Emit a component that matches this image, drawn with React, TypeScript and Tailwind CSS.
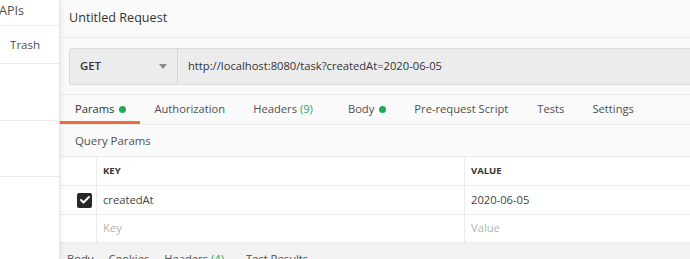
import { Check } from "lucide-react";

const tabs = [
  { name: "Params", dot: true, active: true },
  { name: "Authorization" },
  { name: "Headers", count: "(9)" },
  { name: "Body", dot: true, shift: true },
  { name: "Pre-request Script" },
  { name: "Tests", nudge: true },
  { name: "Settings" },
];

export default function App() {
  return (
    <div className="flex w-[690px] h-[259px] overflow-hidden bg-[#fafafa] text-[#505050] font-['Open_Sans',sans-serif]">
      {/* Sidebar */}
      <div className="w-[60px] shrink-0 bg-white border-r border-[#e6e6e6] shadow-[2px_0_4px_rgba(0,0,0,0.06)] z-10">
        <div className="h-[26px] border-b border-[#ececec] flex items-center text-[12.6px] -ml-[1px] leading-none pb-[2px]">APIs</div>
        <div className="h-[38px] border-b border-[#ececec] flex items-center pl-[10px] text-[11.6px]">Trash</div>
        <div className="h-[57px] border-b border-[#ececec]" />
        <div className="h-[56px] border-b border-[#ececec]" />
      </div>

      {/* Main */}
      <div className="flex-1 min-w-0 flex flex-col">
        <div className="h-[38px] shrink-0 border-b border-[#ececec] flex items-center pl-[9px] pb-[1px] text-[12.6px] text-[#333]">
          Untitled Request
        </div>

        <div className="h-[56px] shrink-0 flex items-center pl-[9px]">
          <div className="flex h-[37px] w-full border border-[#dcdcdc] border-r-0 rounded-l-[3px] bg-[#ececec]">
            <div className="w-[108px] shrink-0 flex items-center justify-between pl-[10px] pr-[10px] border-r border-[#d4d4d4] text-[11.4px] text-[#333] font-semibold">
              <span>GET</span>
              <span className="w-0 h-0 border-l-[4px] border-r-[4px] border-t-[5px] border-l-transparent border-r-transparent border-t-[#8a8a8a]" />
            </div>
            <div className="flex items-center pl-[10px] text-[11.2px] text-[#333] whitespace-nowrap">
              http://localhost:8080/task?createdAt=2020-06-05
            </div>
          </div>
        </div>

        <div className="h-[31px] shrink-0 flex items-stretch border-t border-[#ececec] border-b text-[11.2px] whitespace-nowrap">
          {tabs.map((t) => (
            <div
              key={t.name}
              className={
                (t.active
                  ? "flex items-center gap-[5px] pl-[15px] pr-[14px] border-b-[3px] border-[#f26b3a] pt-[3px] text-[#333]"
                  : "flex items-center gap-[5px] px-[14px] border-b-[3px] border-transparent pt-[3px]") +
                (t.shift ? " ml-[7px]" : "") +
                (t.nudge ? " ml-[1px]" : "")
              }
            >
              <span>
                {t.name}
                {t.count && <span className="text-[#26a65b]"> {t.count}</span>}
              </span>
              {t.dot && <span className="w-[7px] h-[7px] rounded-full bg-[#26a65b]" />}
            </div>
          ))}
        </div>

        <div className="h-[31px] shrink-0 flex items-center pl-[15px] text-[11.4px]">Query Params</div>

        <div className="bg-white border-t border-[#ebebeb] text-[11.2px]">
          <div className="flex h-[29px] border-b border-[#ebebeb]">
            <div className="w-[37px] shrink-0 border-r border-[#ebebeb]" />
            <div className="w-[368px] shrink-0 border-r border-[#ebebeb] flex items-center pl-[6px] text-[9.5px] font-bold text-[#333]">KEY</div>
            <div className="flex-1 flex items-center pl-[6px] text-[9.5px] font-bold text-[#333]">VALUE</div>
          </div>
          <div className="flex h-[29px] border-b border-[#ebebeb]">
            <div className="w-[37px] shrink-0 border-r border-[#ebebeb] flex items-center justify-end pr-[4px]">
              <span className="w-[15px] h-[15px] rounded-[2px] bg-[#282828] flex items-center justify-center">
                <Check className="w-[12px] h-[12px] text-white" strokeWidth={4} />
              </span>
            </div>
            <div className="w-[368px] shrink-0 border-r border-[#ebebeb] flex items-center pl-[6px] text-[#444]">createdAt</div>
            <div className="flex-1 flex items-center pl-[6px] text-[#444]">2020-06-05</div>
          </div>
          <div className="flex h-[28px] border-b border-[#ebebeb]">
            <div className="w-[37px] shrink-0 border-r border-[#ebebeb]" />
            <div className="w-[368px] shrink-0 border-r border-[#ebebeb] flex items-center pl-[6px] text-[#b3b3b3]">Key</div>
            <div className="flex-1 flex items-center pl-[6px] text-[#b3b3b3]">Value</div>
          </div>
        </div>

        <div className="flex-1 bg-[#f2f2f2] flex items-start pt-[8px] pl-[7px] gap-[15px] text-[11.2px] whitespace-nowrap">
          <span>Body</span>
          <span>Cookies</span>
          <span>
            Headers <span className="text-[#26a65b]">(4)</span>
          </span>
          <span className="ml-[7px]">Test Results</span>
        </div>
      </div>
    </div>
  );
}
